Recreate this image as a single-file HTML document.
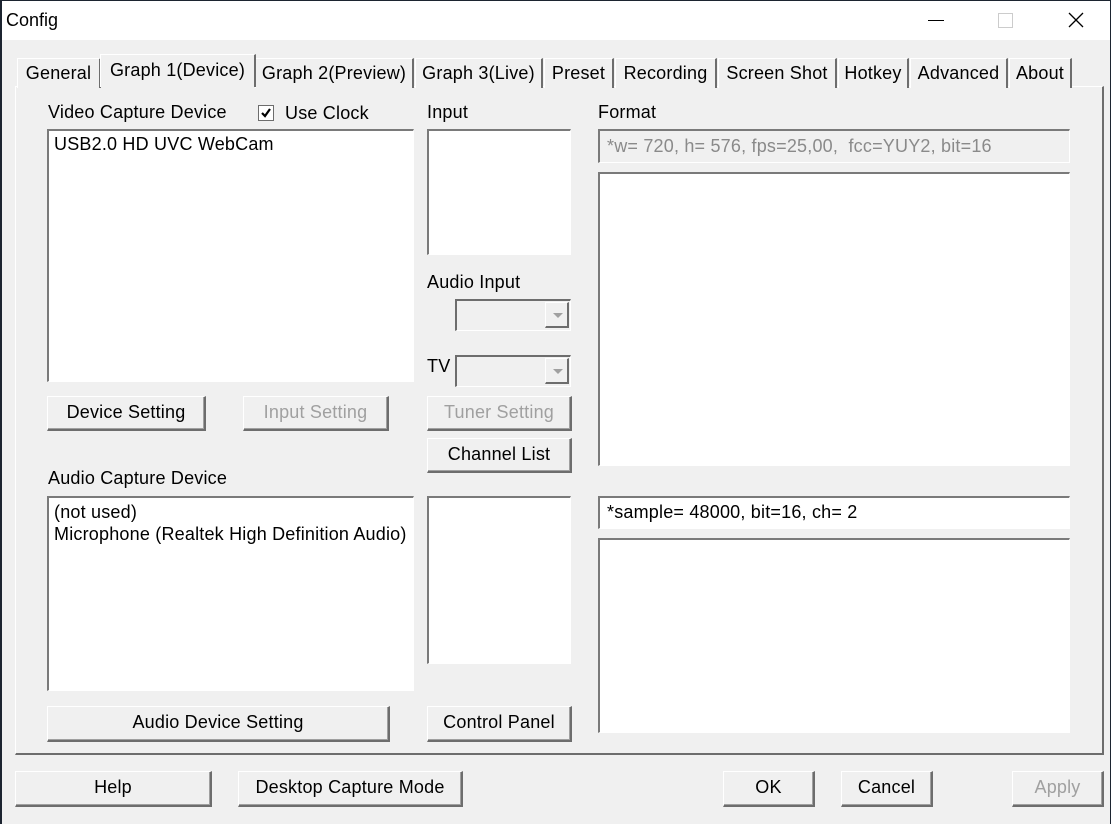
<!DOCTYPE html>
<html><head><meta charset="utf-8"><style>
*{box-sizing:border-box;margin:0;padding:0}
body{width:1111px;height:824px;background:#1c2430;position:relative;overflow:hidden;font-family:"Liberation Sans",sans-serif;font-size:18px;letter-spacing:0.2px;color:#000}
.win{position:absolute;left:2px;top:1px;width:1108px;height:823px;background:#f0f0f0}
.title{position:absolute;left:0;top:0;width:1108px;height:39px;background:#fff}
.a{position:absolute;white-space:nowrap}
.btn{position:absolute;background:#f0f0f0;border-top:1px solid #fff;border-left:1px solid #fff;border-right:2px solid #6d6d6d;border-bottom:2px solid #6d6d6d;box-shadow:inset -1px -1px 0 #a0a0a0;text-align:center;line-height:31px;color:#000}
.dis{color:#a0a0a0}
.box{position:absolute;background:#fff;border-top:2px solid #7a7a7a;border-left:2px solid #7a7a7a;border-right:1px solid #fff;border-bottom:1px solid #fff}
.tab{position:absolute;top:57px;height:30px;background:#f0f0f0;border-top:1px solid #fff;border-left:1px solid #fff;border-right:2px solid #6d6d6d;text-align:center;line-height:28px}
.panel{position:absolute;left:13px;top:85px;width:1089px;height:669px;border-top:1px solid #fff;border-left:1px solid #fff;border-right:2px solid #6d6d6d;border-bottom:2px solid #6d6d6d}
.combo{position:absolute;background:#f0f0f0;border-top:2px solid #6d6d6d;border-left:2px solid #6d6d6d;border-right:1px solid #fff;border-bottom:1px solid #fff}
.arr{position:absolute;right:1px;top:1px;width:24px;height:26px;border-top:1px solid #fff;border-left:1px solid #fff;border-right:2px solid #6d6d6d;border-bottom:2px solid #6d6d6d}
.arr:after{content:"";position:absolute;left:7px;top:10px;border-left:5px solid transparent;border-right:5px solid transparent;border-top:5px solid #a0a0a0}
</style></head><body>
<div class="win">
<div class="title"><div class="a" style="left:4px;top:9px;font-size:18px;letter-spacing:0">Config</div>
<div class="a" style="left:926px;top:19px;width:16px;height:1px;background:#000"></div>
<div class="a" style="left:996px;top:12px;width:15px;height:15px;border:1px solid #ccc"></div>
<svg class="a" style="left:1066px;top:11px" width="16" height="16"><path d="M1 1L15 15M15 1L1 15" stroke="#000" stroke-width="1.3"/></svg>
</div>
<div class="panel"></div>
<div class="tab" style="left:15px;width:84px">General</div>
<div class="tab" style="left:98px;top:53px;height:33px;width:156px;z-index:2;border-bottom:none;line-height:30px">Graph 1(Device)</div>
<div class="tab" style="left:253px;width:159px">Graph 2(Preview)</div>
<div class="tab" style="left:413px;width:128px">Graph 3(Live)</div>
<div class="tab" style="left:542px;width:70px">Preset</div>
<div class="tab" style="left:613px;width:102px">Recording</div>
<div class="tab" style="left:716px;width:119px">Screen Shot</div>
<div class="tab" style="left:836px;width:71px">Hotkey</div>
<div class="tab" style="left:908px;width:98px">Advanced</div>
<div class="tab" style="left:1007px;width:63px">About</div>

<div class="a" style="left:46px;top:101px">Video Capture Device</div>
<div class="a" style="left:256px;top:104px;width:16px;height:16px;background:#fff;border:1px solid #6d6d6d"></div>
<svg class="a" style="left:258px;top:106px" width="12" height="12"><path d="M2 6L5 9L10 2" stroke="#000" stroke-width="2.2" fill="none"/></svg>
<div class="a" style="left:283px;top:102px">Use Clock</div>
<div class="box" style="left:45px;top:128px;width:367px;height:253px"><div class="a" style="left:5px;top:3px">USB2.0 HD UVC WebCam</div></div>
<div class="a" style="left:425px;top:101px">Input</div>
<div class="box" style="left:425px;top:128px;width:144px;height:126px"></div>
<div class="a" style="left:596px;top:101px">Format</div>
<div class="box" style="left:596px;top:128px;width:472px;height:34px;background:#f0f0f0"><div class="a" style="left:7px;top:5px;color:#8a8a8a">*w= 720, h= 576, fps=25,00,&nbsp; fcc=YUY2, bit=16</div></div>
<div class="box" style="left:596px;top:171px;width:472px;height:294px"></div>
<div class="a" style="left:425px;top:271px">Audio Input</div>
<div class="combo" style="left:453px;top:298px;width:116px;height:32px"><div class="arr"></div></div>
<div class="a" style="left:425px;top:355px">TV</div>
<div class="combo" style="left:453px;top:354px;width:116px;height:32px"><div class="arr"></div></div>
<div class="btn" style="left:45px;top:395px;width:159px;height:35px">Device Setting</div>
<div class="btn dis" style="left:241px;top:395px;width:146px;height:35px">Input Setting</div>
<div class="btn dis" style="left:425px;top:395px;width:145px;height:35px">Tuner Setting</div>
<div class="btn" style="left:425px;top:437px;width:145px;height:35px">Channel List</div>
<div class="a" style="left:46px;top:467px">Audio Capture Device</div>
<div class="box" style="left:45px;top:495px;width:367px;height:195px"><div class="a" style="left:5px;top:3px;line-height:22px">(not used)<br>Microphone (Realtek High Definition Audio)</div></div>
<div class="box" style="left:425px;top:495px;width:144px;height:168px"></div>
<div class="box" style="left:596px;top:495px;width:472px;height:33px"><div class="a" style="left:7px;top:4px">*sample= 48000, bit=16, ch= 2</div></div>
<div class="box" style="left:596px;top:537px;width:472px;height:195px"></div>
<div class="btn" style="left:45px;top:705px;width:343px;height:36px">Audio Device Setting</div>
<div class="btn" style="left:425px;top:705px;width:145px;height:36px">Control Panel</div>
<div class="btn" style="left:13px;top:770px;width:197px;height:36px">Help</div>
<div class="btn" style="left:236px;top:770px;width:225px;height:36px">Desktop Capture Mode</div>
<div class="btn" style="left:721px;top:770px;width:92px;height:36px">OK</div>
<div class="btn" style="left:839px;top:770px;width:92px;height:36px">Cancel</div>
<div class="btn dis" style="left:1010px;top:770px;width:92px;height:36px">Apply</div>
</div>
</body></html>
